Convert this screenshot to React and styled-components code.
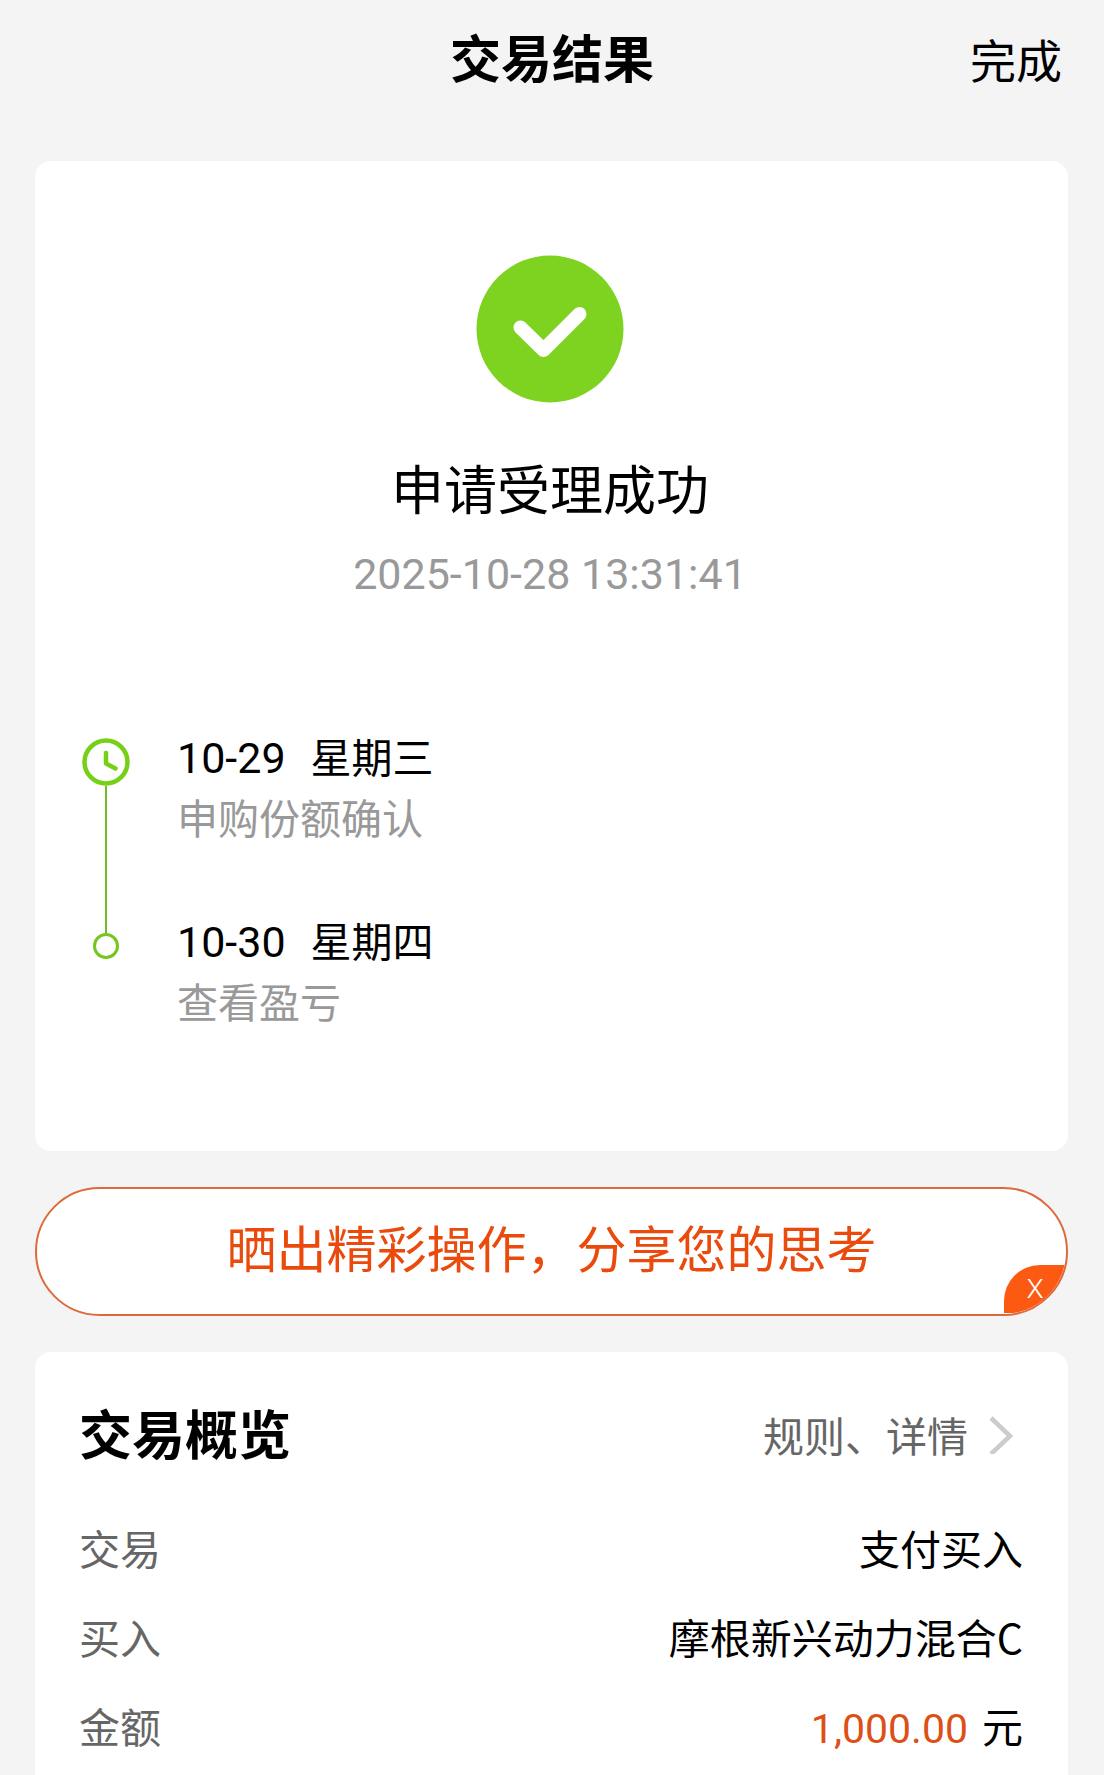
import React from "react";
import styled, { createGlobalStyle } from "styled-components";

const GlobalStyle = createGlobalStyle`
  *, *::before, *::after { box-sizing: border-box; }
  body {
    margin: 0;
    background: #f4f4f4;
    color: #000;
    font-family: "Noto Sans CJK SC", "Noto Sans", sans-serif;
  }
  h1, h2, p, dl, dd, ol { margin: 0; padding: 0; }
  button { font-family: inherit; border: 0; padding: 0; background: none; cursor: pointer; }
`;

const numeric = `Roboto, "Noto Sans CJK SC", sans-serif`;

const Page = styled.div`
  min-height: 100vh;
  display: flex;
  flex-direction: column;
`;

const Header = styled.header`
  height: 112px;
  padding: 0 42px;
  display: grid;
  grid-template-columns: 1fr auto 1fr;
  align-items: center;
`;

const PageTitle = styled.h1`
  grid-column: 2;
  font-size: 51px;
  line-height: 72px;
  font-weight: 700;
`;

const DoneButton = styled.button`
  justify-self: end;
  padding-top: 4px;
  font-size: 46px;
  line-height: 72px;
  color: #000;
`;

const Main = styled.main`
  flex: 1;
  display: flex;
  flex-direction: column;
  gap: 36px;
  padding: 49px 36px 0 35px;
`;

const Card = styled.section`
  background: #fff;
  border-radius: 16px;
`;

const ResultCard = styled(Card)`
  padding: 94px 49px 120px 46px;
`;

const Result = styled.div`
  display: flex;
  flex-direction: column;
  align-items: center;
`;

const SuccessIcon = styled.svg`
  width: 148px;
  height: 148px;
`;

const ResultTitle = styled.h2`
  margin-top: 48px;
  font-size: 53px;
  line-height: 72px;
  font-weight: 400;
`;

const ResultTime = styled.time`
  margin-top: 21px;
  font-family: ${numeric};
  font-size: 43px;
  line-height: 60px;
  color: #999;
`;

const Timeline = styled.ol`
  margin-top: 120px;
  list-style: none;
`;

const Step = styled.li`
  display: flex;
  gap: 46px;
`;

const Track = styled.div`
  width: 50px;
  padding-top: ${(p) => (p.$last ? 25 : 14)}px;
  display: flex;
  flex-direction: column;
  align-items: center;
  margin-bottom: ${(p) => (p.$last ? 0 : -25)}px;
`;

const ClockIcon = styled.svg`
  width: 48px;
  height: 48px;
  flex: none;
`;

const Dot = styled.span`
  width: 26px;
  height: 26px;
  border: 3px solid #76c61f;
  border-radius: 50%;
`;

const Connector = styled.span`
  flex: 1;
  width: 2px;
  background: #72b92c;
`;

const StepText = styled.div`
  padding-bottom: ${(p) => (p.$last ? 0 : 61)}px;
`;

const StepDate = styled.p`
  display: flex;
  align-items: baseline;
  gap: 25px;
  font-size: 41px;
  line-height: 62px;
`;

const DayNumber = styled.span`
  font-family: ${numeric};
  font-size: 43px;
  line-height: 1;
`;

const StepNote = styled.p`
  font-size: 41px;
  line-height: 61px;
  color: #999;
`;

const ShareBar = styled.div`
  position: relative;
  height: 129px;
  border: 2px solid #dc6a3c;
  border-radius: 65px;
  background: #fff;
  overflow: hidden;
`;

const ShareButton = styled.button`
  width: 100%;
  height: 114px;
  font-size: 50px;
  line-height: 72px;
  color: #ea4a0c;
`;

const CloseButton = styled.button`
  position: absolute;
  right: 0;
  bottom: 1px;
  width: 62px;
  height: 48px;
  border-radius: 36px 0 0 0;
  background: #fc5912;
  color: #fff;
  font-family: Inter, sans-serif;
  font-size: 26px;
  font-weight: 300;
  line-height: 40px;
`;

const OverviewCard = styled(Card)`
  flex: 1;
  padding: 42px 45px 0 44px;
  border-radius: 16px 16px 0 0;
`;

const OverviewHead = styled.div`
  display: flex;
  justify-content: space-between;
  align-items: center;
  margin-bottom: 33px;
`;

const OverviewTitle = styled.h2`
  font-size: 53px;
  line-height: 76px;
  font-weight: 700;
`;

const DetailLink = styled.a`
  display: flex;
  align-items: center;
  gap: 20px;
  padding: 4px 9px 0 0;
  font-size: 41px;
  line-height: 61px;
  color: #666;
  text-decoration: none;
`;

const Chevron = styled.svg`
  width: 26px;
  height: 40px;
`;

const Row = styled.div`
  display: flex;
  justify-content: space-between;
  align-items: center;
  height: 89px;
  font-size: 41px;
  line-height: 61px;
`;

const Label = styled.dt`
  color: #666;
`;

const Value = styled.dd`
  display: flex;
  align-items: baseline;
  gap: 14px;
  color: #000;
`;

const Amount = styled.span`
  font-family: ${numeric};
  line-height: 1;
  color: #dd4f17;
`;

const steps = [
  { date: "10-29", day: "星期三", note: "申购份额确认" },
  { date: "10-30", day: "星期四", note: "查看盈亏" },
];

export default function App() {
  return (
    <Page>
      <GlobalStyle />
      <Header>
        <PageTitle>交易结果</PageTitle>
        <DoneButton type="button">完成</DoneButton>
      </Header>
      <Main>
        <ResultCard>
          <Result>
            <SuccessIcon viewBox="0 0 148 148" aria-hidden="true">
              <circle cx="74" cy="74" r="73.5" fill="#7ed321" />
              <path
                d="M44.500 72.500 67.500 95 103.500 59"
                fill="none"
                stroke="#fff"
                strokeWidth="14"
                strokeLinecap="round"
                strokeLinejoin="round"
              />
            </SuccessIcon>
            <ResultTitle>申请受理成功</ResultTitle>
            <ResultTime dateTime="2025-10-28T13:31:41">2025-10-28 13:31:41</ResultTime>
          </Result>
          <Timeline>
            {steps.map((step, i) => {
              const last = i === steps.length - 1;
              return (
                <Step key={step.date}>
                  <Track $last={last}>
                    {last ? (
                      <Dot />
                    ) : (
                      <>
                        <ClockIcon viewBox="0 0 48 48" fill="none" stroke="#76d016" aria-hidden="true">
                          <circle cx="24" cy="24" r="21.500" strokeWidth="4.500" />
                          <path d="M24 15v10.500l9.500 5" strokeWidth="4.500" strokeLinecap="round" strokeLinejoin="round" />
                        </ClockIcon>
                        <Connector />
                      </>
                    )}
                  </Track>
                  <StepText $last={last}>
                    <StepDate>
                      <DayNumber>{step.date}</DayNumber>
                      <span>{step.day}</span>
                    </StepDate>
                    <StepNote>{step.note}</StepNote>
                  </StepText>
                </Step>
              );
            })}
          </Timeline>
        </ResultCard>

        <ShareBar>
          <ShareButton type="button">晒出精彩操作，分享您的思考</ShareButton>
          <CloseButton type="button">X</CloseButton>
        </ShareBar>

        <OverviewCard>
          <OverviewHead>
            <OverviewTitle>交易概览</OverviewTitle>
            <DetailLink href="#details">
              规则、详情
              <Chevron viewBox="0 0 26 40" fill="none" stroke="#ccc" strokeWidth="4.500" aria-hidden="true">
                <path d="M3 4 22 22 3 40" />
              </Chevron>
            </DetailLink>
          </OverviewHead>
          <dl>
            <Row>
              <Label>交易</Label>
              <Value>支付买入</Value>
            </Row>
            <Row>
              <Label>买入</Label>
              <Value>摩根新兴动力混合C</Value>
            </Row>
            <Row>
              <Label>金额</Label>
              <Value>
                <Amount>1,000.00</Amount>
                <span>元</span>
              </Value>
            </Row>
          </dl>
        </OverviewCard>
      </Main>
    </Page>
  );
}
